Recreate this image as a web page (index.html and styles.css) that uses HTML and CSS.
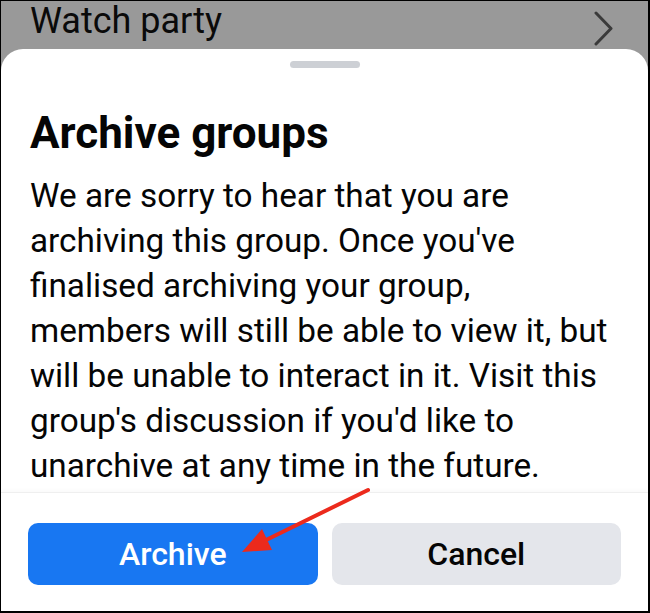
FILE: index.html
```html
<!DOCTYPE html>
<html>
<head>
<meta charset="utf-8">
<link rel="stylesheet" href="styles.css">
</head>
<body>
<div class="frame">
  <div class="behind">
    <span class="behind-title">Watch party</span>
    <svg class="chevron" width="20" height="36" viewBox="0 0 20 36"><path d="M2 2 L17 17.5 L2 33" fill="none" stroke="#3a3a3a" stroke-width="3" stroke-linecap="round" stroke-linejoin="round"/></svg>
  </div>
  <div class="sheet">
    <div class="handle"></div>
    <div class="content">
      <h1 class="title">Archive groups</h1>
      <p class="body">We are sorry to hear that you are<br>archiving this group. Once you've<br>finalised archiving your group,<br>members will still be able to view it, but<br>will be unable to interact in it. Visit this<br>group's discussion if you'd like to<br>unarchive at any time in the future.</p>
    </div>
    <div class="footer">
      <button class="btn btn-primary">Archive</button>
      <button class="btn btn-secondary">Cancel</button>
    </div>
  </div>
  <svg class="arrow" width="650" height="613" viewBox="0 0 650 613">
    <line x1="368" y1="490" x2="262" y2="542" stroke="#ec2a1c" stroke-width="4" stroke-linecap="round"/>
    <polygon points="242,552 262,529 272,550" fill="#ec2a1c"/>
  </svg>
</div>
</body>
</html>
```
FILE: styles.css
```css
* { box-sizing: border-box; }
html, body { margin: 0; padding: 0; background: #fff; }
.frame {
  position: relative;
  width: 650px;
  height: 613px;
  border-style: solid;
  border-color: #000;
  border-width: 1px 2px 2px 1px;
  background: #999999;
  display: flex;
  flex-direction: column;
  overflow: hidden;
  font-family: "Roboto", "Inter", sans-serif;
  color: #050505;
}
.behind {
  height: 48px;
  display: flex;
  align-items: flex-start;
  justify-content: space-between;
  padding: 0 34px 0 29px;
}
.behind-title {
  font-size: 36px;
  line-height: 40px;
  color: #0a0a0a;
}
.chevron { margin-top: 10px; }
.sheet {
  flex: 1;
  background: #fff;
  border-radius: 22px 22px 0 0;
  display: flex;
  flex-direction: column;
}
.handle {
  width: 70px;
  height: 7px;
  border-radius: 4px;
  background: #cdd0d5;
  margin: 12px auto 0;
}
.content {
  flex: 1;
  padding: 0 20px 0 29px;
}
.title {
  margin: 40px 0 0;
  font-size: 44px;
  line-height: 50px;
  font-weight: 700;
}
.body {
  margin: 15px 0 0;
  font-size: 33.3px;
  line-height: 45px;
  font-weight: 400;
  white-space: nowrap;
}
.footer {
  height: 119px;
  border-top: 1px solid #efefef;
  box-shadow: 0 -2px 4px rgba(0,0,0,0.025);
  display: flex;
  gap: 14px;
  padding: 30px 27px 0 27px;
}
.btn {
  flex: 1;
  height: 62px;
  border: none;
  border-radius: 10px;
  font-family: "Roboto", "Inter", sans-serif;
  font-size: 32px;
  font-weight: 500;
}
.btn-primary { background: #1877f2; color: #fff; }
.btn-secondary { background: #e4e6eb; color: #050505; }
.arrow { position: absolute; left: -1px; top: -1px; pointer-events: none; }
```
